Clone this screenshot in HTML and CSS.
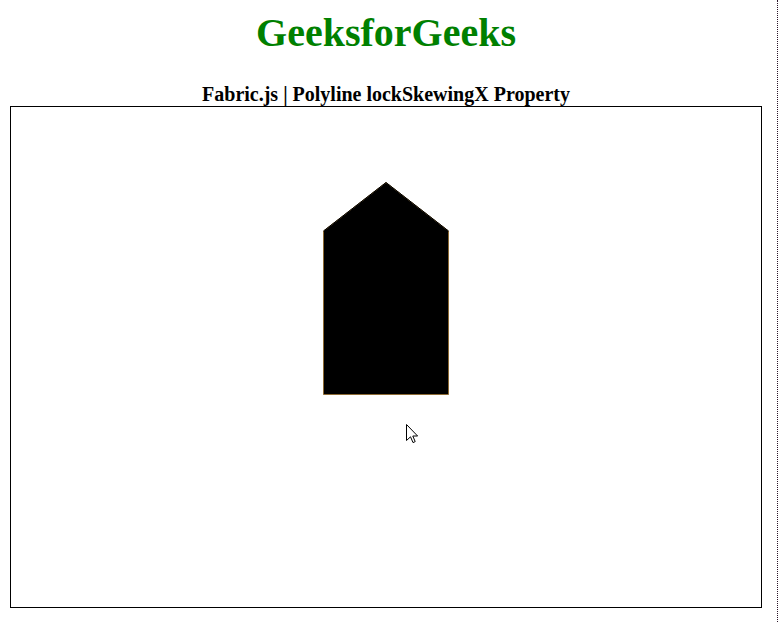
FILE: index.html
```html
<!DOCTYPE html>
<html>
<head>
<meta charset="utf-8">
<link rel="stylesheet" href="styles.css">
</head>
<body>
<div class="page">
  <h1 class="title">GeeksforGeeks</h1>
  <div class="subtitle">Fabric.js | Polyline lockSkewingX Property</div>
  <div class="canvas">
    <svg class="drawing" width="750" height="500" viewBox="0 0 750 500">
      <polygon points="375,75.5 312.5,124 312.5,287.5 437.5,287.5 437.5,124" fill="#000" stroke="#8c6a34" stroke-width="1"/>
      <polyline points="312.5,124 375,75.5 437.5,124" fill="none" stroke="#000" stroke-width="1"/>
    </svg>
    <svg class="cursor" width="13" height="21" viewBox="0 0 13 21">
      <path d="M0.5,0.5 L0.5,16.5 L4.5,12.8 L7,18.6 L9.2,17.6 L6.8,12 L11.6,12 Z" fill="#fff" stroke="#000" stroke-width="1" stroke-linejoin="miter"/>
    </svg>
  </div>
</div>
</body>
</html>
```
FILE: styles.css
```css
html, body {
  margin: 0;
  padding: 0;
  background: #fff;
}
body {
  font-family: "Liberation Serif", "Times New Roman", serif;
  width: 778px;
  min-height: 622px;
  box-sizing: border-box;
  border-right: 1px dotted #2a1428;
  overflow: hidden;
}
.page {
  width: 752px;
  padding: 10px 0 0 10px;
  text-align: center;
}
.title {
  margin: 0 0 27px 0;
  font-size: 40px;
  line-height: 46px;
  font-weight: bold;
  color: #008000;
}
.subtitle {
  font-size: 20px;
  line-height: 23px;
  font-weight: bold;
  color: #000;
}
.canvas {
  position: relative;
  width: 750px;
  height: 500px;
  border: 1px solid #000;
  text-align: left;
}
.drawing {
  display: block;
}
.cursor {
  position: absolute;
  left: 395px;
  top: 317px;
}
```
